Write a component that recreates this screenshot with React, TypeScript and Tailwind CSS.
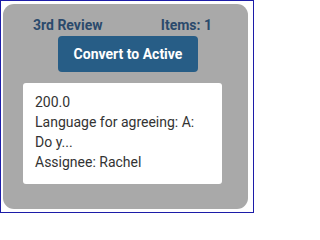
export default function App() {
  return (
    <div className="w-[254px] h-[213px] border border-[#1c1ca8] bg-white pt-[3px] pl-[2px]" style={{ fontFamily: 'Roboto, "Liberation Sans", sans-serif' }}>
      <div className="w-[245px] h-[205px] rounded-[11px] bg-[#a9a9a9] flex flex-col">
        <div className="flex justify-between pl-[30px] pr-[36px] pt-[11px] text-[14px] leading-[20px] font-bold text-[#2b4a6c]">
          <span>3rd Review</span>
          <span>Items: 1</span>
        </div>
        <div className="pl-[55px] mt-[1px]">
          <button className="w-[140px] h-[36px] rounded-[4px] bg-[#275d86] text-white font-bold text-[14px]">Convert to Active</button>
        </div>
        <div className="ml-[20px] mt-[11px] w-[199px] h-[101px] bg-white rounded-[3px] px-[12px] pt-[9px] text-[14px] leading-[20px] text-[#333333]">
          <div>200.0</div>
          <div>Language for agreeing: A: Do y...</div>
          <div>Assignee: Rachel</div>
        </div>
      </div>
    </div>
  );
}
